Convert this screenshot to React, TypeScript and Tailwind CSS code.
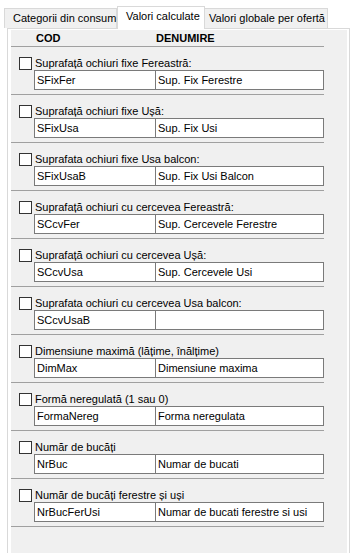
const groups = [
  { label: "Suprafață ochiuri fixe Fereastră:", cod: "SFixFer", den: "Sup. Fix Ferestre" },
  { label: "Suprafață ochiuri fixe Ușă:", cod: "SFixUsa", den: "Sup. Fix Usi" },
  { label: "Suprafata ochiuri fixe Usa balcon:", cod: "SFixUsaB", den: "Sup. Fix Usi Balcon" },
  { label: "Suprafață ochiuri cu cercevea Fereastră:", cod: "SCcvFer", den: "Sup. Cercevele Ferestre" },
  { label: "Suprafață ochiuri cu cercevea Ușă:", cod: "SCcvUsa", den: "Sup. Cercevele Usi" },
  { label: "Suprafata ochiuri cu cercevea Usa balcon:", cod: "SCcvUsaB", den: "" },
  { label: "Dimensiune maximă (lățime, înălțime)", cod: "DimMax", den: "Dimensiune maxima" },
  { label: "Formă neregulată (1 sau 0)", cod: "FormaNereg", den: "Forma neregulata" },
  { label: "Număr de bucăți", cod: "NrBuc", den: "Numar de bucati" },
  { label: "Număr de bucăți ferestre și uși", cod: "NrBucFerUsi", den: "Numar de bucati ferestre si usi" },
];

const App = () => {
  return (
    <div className="w-[354px] h-[553px] bg-white overflow-hidden font-['Liberation_Sans',Arial,sans-serif] text-[11px] text-black">
      {/* Tabs */}
      <div className="flex items-end h-[28px] pl-[4px] whitespace-nowrap">
        <div className="h-[20px] w-[113px] border border-b-0 border-[#d9d9d9] bg-[#f0f0f0] flex items-center pl-[8px] leading-none">
          Categorii din consum
        </div>
        <div className="relative z-10 h-[23px] w-[88px] border border-b-0 border-[#d9d9d9] bg-white -mb-px flex items-start pt-[4px] pl-[8px] leading-none">
          Valori calculate
        </div>
        <div className="h-[20px] w-[123px] border border-b-0 border-l-0 border-[#d9d9d9] bg-[#f0f0f0] flex items-center pl-[4px] leading-none">
          Valori globale per ofertă
        </div>
      </div>

      {/* Panel */}
      <div className="ml-[7px] w-[343px] h-[525px] border border-b-0 border-[#d9d9d9] bg-white pl-[3px] pr-[2px] pt-[1px]">
        <div className="bg-[#f0f0f0] h-full">
          <div className="h-[16px] flex items-center font-bold pt-[1px]">
            <div className="w-[145px] pl-[25px]">COD</div>
            <div>DENUMIRE</div>
          </div>
          <div className="h-px w-[313px] bg-[#a0a0a0]" />

          {groups.map((g) => (
            <div key={g.cod}>
              <div className="pt-[10px] h-[23px] flex items-center pl-[8px] whitespace-nowrap">
                <div className="w-[13px] h-[13px] border border-[#333333] bg-white shrink-0" />
                <span className="ml-[3px] leading-none">{g.label}</span>
              </div>
              <div className="ml-[23px] w-[290px] h-[20px] border border-[#7a7a7a] bg-white flex">
                <div className="w-[121px] border-r border-[#7a7a7a] flex items-center pl-[2px]">
                  {g.cod}
                </div>
                <div className="flex-1 flex items-center pl-[2px]">{g.den}</div>
              </div>
              <div className="mt-[4px] h-px w-[313px] bg-[#a0a0a0]" />
            </div>
          ))}
        </div>
      </div>
    </div>
  );
};

export default App;
